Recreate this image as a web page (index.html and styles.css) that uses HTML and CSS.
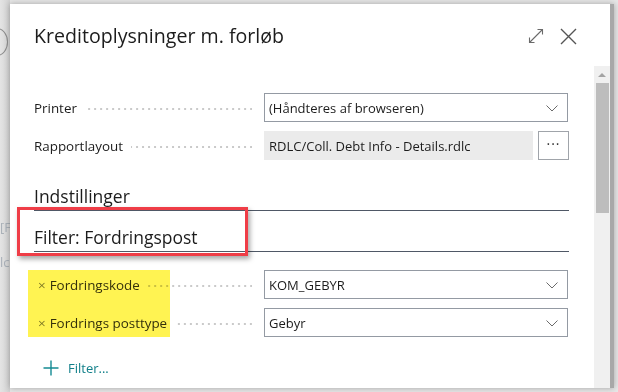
FILE: index.html
```html
<!DOCTYPE html>
<html lang="da">
<head>
    <meta charset="UTF-8">
    <meta name="viewport" content="width=device-width, initial-scale=1.0">
    <title>Kreditoplysninger m. forløb</title>
    <link rel="stylesheet" href="styles.css">
</head>
<body>
    <div class="backdrop">
        <span class="ghost-ring"></span>
        <span class="ghost-text ghost-a">[F</span>
        <span class="ghost-text ghost-b">lc</span>
    </div>

    <div class="dialog">
        <div class="dialog-header">
            <h1>Kreditoplysninger m. forløb</h1>
            <div class="header-actions">
                <button class="icon-btn" title="Udvid">
                    <svg width="16" height="16" viewBox="0 0 16 16">
                        <path d="M1.5 14.5 L14.5 1.5 M9.5 1.5 H14.5 V6.5 M1.5 9.5 V14.5 H6.5" fill="none" stroke="#6a6a6a" stroke-width="1.1"/>
                    </svg>
                </button>
                <button class="icon-btn" title="Luk">
                    <svg width="17" height="17" viewBox="0 0 17 17">
                        <path d="M1 1 L16 16 M16 1 L1 16" fill="none" stroke="#555" stroke-width="1.4"/>
                    </svg>
                </button>
            </div>
        </div>

        <div class="dialog-body">
            <div class="content">
                <div class="field-row">
                    <div class="caption"><span>Printer</span><i class="leader"></i></div>
                    <div class="input select">
                        <span>(Håndteres af browseren)</span>
                        <svg class="chevron" width="12" height="7" viewBox="0 0 12 7"><path d="M0.5 0.5 L6 6 L11.5 0.5" fill="none" stroke="#6b6b6b" stroke-width="1"/></svg>
                    </div>
                </div>
                <div class="field-row">
                    <div class="caption"><span>Rapportlayout</span><i class="leader"></i></div>
                    <div class="lookup">
                        <div class="input readonly"><span>RDLC/Coll. Debt Info - Details.rdlc</span></div>
                        <button class="assist">&middot;&middot;&middot;</button>
                    </div>
                </div>

                <h2 class="group-title first">Indstillinger</h2>

                <div class="marked">
                    <h2 class="group-title">Filter: Fordringspost</h2>
                    <span class="red-box"></span>
                </div>

                <div class="filters">
                    <span class="highlight"></span>
                    <div class="field-row">
                        <div class="caption"><span><b class="remove">×</b>Fordringskode</span><i class="leader"></i></div>
                        <div class="input select">
                            <span>KOM_GEBYR</span>
                            <svg class="chevron" width="12" height="7" viewBox="0 0 12 7"><path d="M0.5 0.5 L6 6 L11.5 0.5" fill="none" stroke="#6b6b6b" stroke-width="1"/></svg>
                        </div>
                    </div>
                    <div class="field-row">
                        <div class="caption"><span><b class="remove">×</b>Fordrings posttype</span><i class="leader"></i></div>
                        <div class="input select">
                            <span>Gebyr</span>
                            <svg class="chevron" width="12" height="7" viewBox="0 0 12 7"><path d="M0.5 0.5 L6 6 L11.5 0.5" fill="none" stroke="#6b6b6b" stroke-width="1"/></svg>
                        </div>
                    </div>
                </div>

                <a class="add-filter" href="#">
                    <svg width="16" height="16" viewBox="0 0 16 16"><path d="M8 0.5 V15.5 M0.5 8 H15.5" fill="none" stroke="#148a93" stroke-width="1.4"/></svg>
                    <span>Filter...</span>
                </a>
            </div>

            <div class="scrollbar">
                <span class="arrow-up"></span>
                <span class="thumb"></span>
            </div>
        </div>
    </div>
</body>
</html>
```

FILE: styles.css
```css
body {
    margin: 0;
    width: 618px;
    height: 392px;
    overflow: hidden;
    background: #e7e7e7;
    font-family: "Open Sans", "Noto Sans", sans-serif;
    color: #1c1c1c;
    position: relative;
}

.backdrop {
    position: absolute;
    left: 0;
    top: 0;
    width: 10px;
    height: 392px;
    background: linear-gradient(to right, #e4e4e4, #d2d2d2);
    overflow: hidden;
}

.ghost-ring {
    position: absolute;
    left: -14px;
    top: 28px;
    width: 20px;
    height: 26px;
    border: 1px solid #8c8c8c;
    border-radius: 50%;
}

.ghost-text {
    position: absolute;
    left: 0;
    font-size: 13px;
    color: #a9b0b8;
}

.ghost-a {
    top: 218px;
}

.ghost-b {
    top: 253px;
}

.dialog {
    margin: 4px 0 0 10px;
    width: 600px;
    height: 384px;
    background: #fff;
    border-right: 4px solid #a8a8a8;
    box-shadow: 0 0 6px rgba(0, 0, 0, 0.3);
    display: flex;
    flex-direction: column;
    position: relative;
}

.dialog-header {
    display: flex;
    align-items: center;
    justify-content: space-between;
    padding: 18px 33px 16px 24px;
    height: 28px;
}

.dialog-header h1 {
    margin: 0;
    font-size: 19.6px;
    font-weight: 400;
    line-height: 28px;
    color: #1c1c1c;
}

.header-actions {
    display: flex;
    align-items: center;
    gap: 16px;
}

.icon-btn {
    border: none;
    background: none;
    padding: 0;
    display: flex;
}

.dialog-body {
    flex: 1;
    display: flex;
    min-height: 0;
}

.content {
    flex: 1;
    padding: 27px 25px 0 24px;
}

.field-row {
    display: flex;
    align-items: center;
    height: 29px;
    margin-bottom: 9px;
}

.caption {
    width: 218px;
    margin-right: 12px;
    display: flex;
    align-items: center;
    font-size: 13.4px;
    font-weight: 500;
    white-space: nowrap;
}

.leader {
    flex: 1;
    height: 2px;
    margin: 3px 0 0 8px;
    background-image: linear-gradient(to right, transparent 4px, #cacaca 4px);
    background-size: 6px 2px;
    background-position: right top;
    background-repeat: repeat-x;
}

.input {
    box-sizing: border-box;
    height: 29px;
    width: 304px;
    border: 1px solid #949aa3;
    display: flex;
    align-items: center;
    justify-content: space-between;
    padding: 0 9px 0 4px;
    font-size: 13px;
}

.chevron {
    margin-top: 1px;
}

.lookup {
    display: flex;
    gap: 5px;
}

.readonly {
    width: 269px;
    background: #ebebeb;
    border-color: #ebebeb;
}

.assist {
    box-sizing: border-box;
    width: 31px;
    height: 29px;
    border: 1px solid #a0a4aa;
    background: #fff;
    padding: 0 0 4px;
    font-family: inherit;
    font-size: 14px;
    letter-spacing: 1px;
    color: #333;
}

.group-title {
    margin: 0;
    font-size: 17.5px;
    font-weight: 400;
    line-height: 24px;
    padding-bottom: 2px;
    border-bottom: 1px solid #4f5866;
}

.group-title.first {
    margin-top: 24px;
}

.marked {
    position: relative;
    margin-top: 14px;
}

.red-box {
    position: absolute;
    left: -17px;
    top: -18px;
    width: 225px;
    height: 43px;
    border: 3px solid #ef3d47;
    box-shadow: 2px 3px 5px rgba(0, 0, 0, 0.35);
}

.filters {
    position: relative;
    margin-top: 18px;
}

.highlight {
    position: absolute;
    left: -6px;
    top: 0;
    width: 142px;
    height: 67px;
    background: #fff352;
    mix-blend-mode: multiply;
}

.remove {
    font-weight: 400;
    color: #7c7c6a;
    margin: 0 4px 0 4px;
}

.filters .caption {
    color: #34331f;
}

.add-filter {
    display: flex;
    align-items: center;
    gap: 9px;
    margin: 21px 0 0 9px;
    font-size: 13px;
    color: #107f89;
    text-decoration: none;
    line-height: 20px;
}

.scrollbar {
    width: 17px;
    background: #f0f0f0;
    display: flex;
    flex-direction: column;
    align-items: center;
}

.arrow-up {
    margin-top: 7px;
    width: 0;
    height: 0;
    border-left: 4px solid transparent;
    border-right: 4px solid transparent;
    border-bottom: 4px solid #a3a3a3;
}

.thumb {
    margin-top: 6px;
    width: 13px;
    height: 130px;
    background: #bdbdbd;
}
```
